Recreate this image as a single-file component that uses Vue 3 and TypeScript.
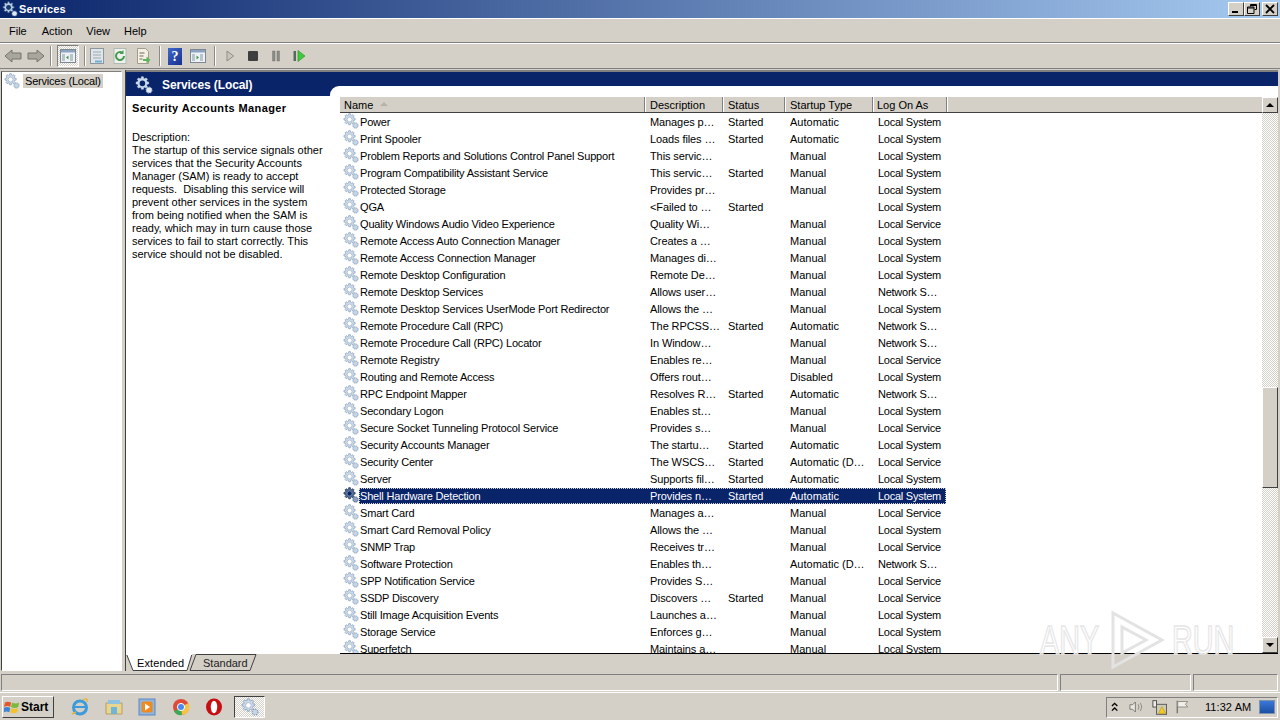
<script setup lang="ts">
interface Row { n: string; d: string; s: string; t: string; l: string; sel?: boolean }
const LS = 'Local System', LV = 'Local Service', NS = 'Network S…', ST = 'Started', AU = 'Automatic', MA = 'Manual'
const rows: Row[] = [
  { n: 'Power', d: 'Manages p…', s: ST, t: AU, l: LS },
  { n: 'Print Spooler', d: 'Loads files …', s: ST, t: AU, l: LS },
  { n: 'Problem Reports and Solutions Control Panel Support', d: 'This servic…', s: '', t: MA, l: LS },
  { n: 'Program Compatibility Assistant Service', d: 'This servic…', s: ST, t: MA, l: LS },
  { n: 'Protected Storage', d: 'Provides pr…', s: '', t: MA, l: LS },
  { n: 'QGA', d: '<Failed to …', s: ST, t: '', l: LS },
  { n: 'Quality Windows Audio Video Experience', d: 'Quality Wi…', s: '', t: MA, l: LV },
  { n: 'Remote Access Auto Connection Manager', d: 'Creates a …', s: '', t: MA, l: LS },
  { n: 'Remote Access Connection Manager', d: 'Manages di…', s: '', t: MA, l: LS },
  { n: 'Remote Desktop Configuration', d: 'Remote De…', s: '', t: MA, l: LS },
  { n: 'Remote Desktop Services', d: 'Allows user…', s: '', t: MA, l: NS },
  { n: 'Remote Desktop Services UserMode Port Redirector', d: 'Allows the …', s: '', t: MA, l: LS },
  { n: 'Remote Procedure Call (RPC)', d: 'The RPCSS…', s: ST, t: AU, l: NS },
  { n: 'Remote Procedure Call (RPC) Locator', d: 'In Window…', s: '', t: MA, l: NS },
  { n: 'Remote Registry', d: 'Enables re…', s: '', t: MA, l: LV },
  { n: 'Routing and Remote Access', d: 'Offers rout…', s: '', t: 'Disabled', l: LS },
  { n: 'RPC Endpoint Mapper', d: 'Resolves R…', s: ST, t: AU, l: NS },
  { n: 'Secondary Logon', d: 'Enables st…', s: '', t: MA, l: LS },
  { n: 'Secure Socket Tunneling Protocol Service', d: 'Provides s…', s: '', t: MA, l: LV },
  { n: 'Security Accounts Manager', d: 'The startu…', s: ST, t: AU, l: LS },
  { n: 'Security Center', d: 'The WSCS…', s: ST, t: 'Automatic (D…', l: LV },
  { n: 'Server', d: 'Supports fil…', s: ST, t: AU, l: LS },
  { n: 'Shell Hardware Detection', d: 'Provides n…', s: ST, t: AU, l: LS, sel: true },
  { n: 'Smart Card', d: 'Manages a…', s: '', t: MA, l: LV },
  { n: 'Smart Card Removal Policy', d: 'Allows the …', s: '', t: MA, l: LS },
  { n: 'SNMP Trap', d: 'Receives tr…', s: '', t: MA, l: LV },
  { n: 'Software Protection', d: 'Enables th…', s: '', t: 'Automatic (D…', l: NS },
  { n: 'SPP Notification Service', d: 'Provides S…', s: '', t: MA, l: LV },
  { n: 'SSDP Discovery', d: 'Discovers …', s: ST, t: MA, l: LV },
  { n: 'Still Image Acquisition Events', d: 'Launches a…', s: '', t: MA, l: LS },
  { n: 'Storage Service', d: 'Enforces g…', s: '', t: MA, l: LS },
  { n: 'Superfetch', d: 'Maintains a…', s: '', t: MA, l: LS },
]
const columns = [
  { label: 'Name', w: 305 },
  { label: 'Description', w: 78 },
  { label: 'Status', w: 62 },
  { label: 'Startup Type', w: 88 },
  { label: 'Log On As', w: 74 },
]
const gearPath = 'M7 0.8h2l.3 1.8 1.3.5 1.5-1 1.4 1.4-1 1.5.5 1.3 1.8.3v2l-1.8.3-.5 1.3 1 1.5-1.4 1.4-1.5-1-1.3.5-.3 1.8h-2l-.3-1.8-1.3-.5-1.5 1-1.4-1.4 1-1.5-.5-1.3-1.8-.3v-2l1.8-.3.5-1.3-1-1.5 1.4-1.4 1.5 1 1.3-.5z'
const descLines = [
  'The startup of this service signals other',
  'services that the Security Accounts',
  'Manager (SAM) is ready to accept',
  'requests.\u00a0 Disabling this service will',
  'prevent other services in the system',
  'from being notified when the SAM is',
  'ready, which may in turn cause those',
  'services to fail to start correctly. This',
  'service should not be disabled.',
]
</script>

<template>
  <div class="screen">
    <header class="titlebar">
      <svg class="ico16" viewBox="0 0 16 16"><g transform="scale(.82)"><path :d="gearPath" fill="#b9cfe6" stroke="#32527f" stroke-width=".8" /><circle cx="8" cy="8" r="3" fill="#17386e" /></g><circle cx="12.500" cy="12.500" r="2.600" fill="#dfe9f4" stroke="#4a6b9a" stroke-width="1" stroke-dasharray="1.200 .8" /></svg>
      <span class="title">Services</span>
      <div class="winbtns">
        <button class="wb"><span class="wmin"></span></button>
        <button class="wb"><svg viewBox="0 0 10 10" width="10" height="10"><path d="M3.5 .5h6v5h-2M3.5 .5v2M.5 3h6.5v6.500H.5z M.5 4h6.500 M3.500 1.500h6" fill="none" stroke="#000" /></svg></button>
        <button class="wb wbx"><svg viewBox="0 0 10 10" width="10" height="10"><path d="M1 1l8 8M9 1l-8 8" stroke="#000" stroke-width="1.800" /></svg></button>
      </div>
    </header>

    <nav class="menubar">
      <span class="m-file">File</span><span class="m-action">Action</span><span class="m-view">View</span><span class="m-help">Help</span>
    </nav>

    <div class="toolbar">
      <svg class="tb-arrow" viewBox="0 0 18 16"><path d="M1 8l7-6v3h9v6H8v3z" fill="#a9a69e" stroke="#77746c" /></svg>
      <svg class="tb-arrow" viewBox="0 0 18 16"><path d="M17 8l-7-6v3H1v6h9v3z" fill="#a9a69e" stroke="#77746c" /></svg>
      <i class="sep sep1"></i>
      <div class="tb-pressed">
        <svg class="ico18" viewBox="0 0 18 18"><rect x="1.500" y="2.500" width="15" height="13" fill="#eef2f6" stroke="#7d8890" /><rect x="2" y="3" width="14" height="2.500" fill="#8ba3c0" /><path d="M3 7h3v7H3zM11 7h3v7h-3z" fill="#b9c3cc" /><path d="M9.500 8.500v4l-2.500-2z" fill="#3d9a4a" /></svg>
      </div>
      <i class="sep sep2"></i>
      <svg class="ico18" viewBox="0 0 18 18"><rect x="2.500" y="1.500" width="13" height="15" fill="#dfe5e8" stroke="#8b979d" /><path d="M5 5h8M5 8h8M5 11h8" stroke="#9aa9b5" /><path d="M7 14.500h7" stroke="#6fb0d4" stroke-width="2" /></svg>
      <svg class="ico18" viewBox="0 0 18 18"><rect x="3" y="1.500" width="12" height="15" fill="#eef2ee" stroke="#b0bab0" /><path d="M13 9a4 4 0 1 1-1.500-3.100" fill="none" stroke="#4a9a54" stroke-width="2" /><path d="M12.500 3v4h-4z" fill="#4a9a54" /></svg>
      <svg class="ico18" viewBox="0 0 18 18"><path d="M3.500 1.500h8l3 3v12h-11z" fill="#f4f1e4" stroke="#a09d8a" /><path d="M5.500 6h5M5.500 9h4M5.500 12h3" stroke="#6a6a5e" /><path d="M9 12h3.500v-2.500l4 3.500-4 3.500V14H9z" fill="#5cb45f" /></svg>
      <i class="sep sep3"></i>
      <div class="help">?</div>
      <svg class="ico18 gap-s" viewBox="0 0 18 18"><rect x="1.500" y="2.500" width="15" height="13" fill="#eef2f6" stroke="#7d8890" /><rect x="2" y="3" width="14" height="2.500" fill="#8ba3c0" /><path d="M3 7h3v7H3zM11 7h3v7h-3z" fill="#b9c3cc" /><path d="M7.500 8.500v4l2.500-2z" fill="#3d9a4a" /></svg>
      <i class="sep sep3"></i>
      <svg class="ctl" viewBox="0 0 14 14"><path d="M4 2l6.500 5L4 12z" fill="#c9c6be" stroke="#8f8c85" /></svg>
      <svg class="ctl" viewBox="0 0 14 14"><rect x="2" y="2" width="10" height="10" rx="1" fill="#3e3e3e" /></svg>
      <svg class="ctl" viewBox="0 0 14 14"><path d="M3.500 2h2.500v10H3.500zM8 2h2.500v10H8z" fill="#8b8b87" stroke="#77776f" stroke-width=".5" /></svg>
      <svg class="ctl" viewBox="0 0 14 14"><path d="M1.500 2h2.500v10H1.500z" fill="#5a6a5a" /><path d="M6 1.500l7 5.500-7 5.500z" fill="#3ecb3a" stroke="#238a22" stroke-width=".6" /></svg>
    </div>

    <main class="panes">
      <aside class="tree">
        <div class="tree-item">
          <svg class="ico16" viewBox="0 0 16 16"><g transform="scale(.82)"><path :d="gearPath" fill="#cfdbe9" stroke="#8aa2bd" stroke-width=".9" /><circle cx="8" cy="8" r="3" fill="#fff" stroke="#8aa2bd" stroke-width=".7" /></g><circle cx="12.500" cy="12.500" r="2.600" fill="#c6d5e5" stroke="#7f98b5" stroke-width="1" stroke-dasharray="1.200 .8" /></svg>
          <span class="tree-label">Services (Local)</span>
        </div>
      </aside>

      <section class="right">
        <div class="right-body">
          <div class="detail">
            <div class="detail-head">
              <svg class="ico18" viewBox="0 0 16 16"><g transform="scale(.82)"><path :d="gearPath" fill="#c8d9ec" stroke="#e8f0f8" stroke-width=".5" /><circle cx="8" cy="8" r="3" fill="#0a246a" /></g><circle cx="12.500" cy="12.500" r="2.600" fill="#dfe9f4" stroke="#9fb5d0" stroke-width="1" stroke-dasharray="1.200 .8" /></svg>
              <span>Services (Local)</span>
            </div>
            <div class="detail-text">
              <h2>Security Accounts Manager</h2>
              <p class="d-label">Description:</p>
              <p v-for="line in descLines" :key="line" class="d-body">{{ line }}</p>
            </div>
          </div>

          <div class="listpane">
            <div class="listwhite">
              <div class="listframe">
                <div class="list">
                  <div class="thead">
                    <div v-for="(c, i) in columns" :key="c.label" class="th" :style="{ width: c.w + 'px' }">
                      {{ c.label }}<span v-if="i === 0" class="sort"></span>
                    </div>
                  </div>
                  <div class="tbody">
                    <div v-for="r in rows" :key="r.n" class="row" :class="{ sel: r.sel }">
                      <svg class="ico16 rowico" viewBox="0 0 16 16">
                        <g transform="scale(.82)">
                          <path :d="gearPath" :fill="r.sel ? '#4e6a94' : '#cfdbe9'" :stroke="r.sel ? '#1c2f52' : '#8aa2bd'" stroke-width=".9" />
                          <circle cx="8" cy="8" r="3" :fill="r.sel ? '#0a246a' : '#fff'" stroke="#8aa2bd" stroke-width=".7" />
                        </g>
                        <circle cx="12.500" cy="12.500" r="2.600" :fill="r.sel ? '#8ea4c2' : '#c6d5e5'" :stroke="r.sel ? '#33507c' : '#7f98b5'" stroke-width="1" stroke-dasharray="1.200 .8" />
                      </svg>
                      <div class="cells">
                        <div class="c c-name">{{ r.n }}</div>
                        <div class="c c-d">{{ r.d }}</div>
                        <div class="c c-s">{{ r.s }}</div>
                        <div class="c c-t">{{ r.t }}</div>
                        <div class="c c-l">{{ r.l }}</div>
                      </div>
                    </div>
                  </div>
                </div>
                <div class="vscroll">
                  <button class="sb"><span class="up"></span></button>
                  <div class="track track-a"></div>
                  <div class="thumb"></div>
                  <div class="track track-b"></div>
                  <button class="sb"><span class="down"></span></button>
                </div>
              </div>
            </div>
          </div>
        </div>

        <div class="tabs">
          <svg class="tabshape" width="66" height="17" viewBox="0 0 66 17"><path d="M.500 0L7 16.500h54L66 0" fill="#fff" stroke="#404040" /><path d="M0 .500h66" stroke="#fff" /></svg>
          <span class="tab tab-a">Extended</span>
          <svg class="tabshape tab2" width="68" height="17" viewBox="0 0 68 17"><path d="M1 16.500L7 .5h60L61 16.500z" fill="#d4d0c8" stroke="#404040" /></svg>
          <span class="tab tab-b">Standard</span>
        </div>
      </section>
    </main>

    <div class="statusbar">
      <div class="st st1"></div><div class="st st2"></div><div class="st st3"></div>
    </div>

    <footer class="taskbar">
      <button class="start">
        <svg width="16" height="16" viewBox="0 0 18 16"><path d="M1 3q3-2 7 0l-1 5q-3-2-7 0z" fill="#e5562b" /><path d="M9 3q4 2 8 0l-1 5q-4 2-8 0z" fill="#7cb93a" /><path d="M0 9q3-2 7 0l-1 5q-3-2-7 0z" fill="#3a83d6" /><path d="M8 9q4 2 8 0l-1 5q-4 2-8 0z" fill="#f2c22e" /></svg>
        <b>Start</b>
      </button>
      <div class="quick">
        <svg width="20" height="20" viewBox="0 0 20 20"><circle cx="10" cy="10.500" r="6.500" fill="none" stroke="#3d9bdc" stroke-width="3" /><path d="M5 10h11" stroke="#3d9bdc" stroke-width="2" /><path d="M3 16Q1 18 6 15M13 3q5-3 4 2" fill="none" stroke="#e5b43a" stroke-width="1.500" /></svg>
        <svg width="20" height="20" viewBox="0 0 20 20"><path d="M2 6h16v11H2z" fill="#e9d58f" stroke="#b59f5e" /><path d="M4 3h12v4H4z" fill="#8fc1e0" /><path d="M7 10h6v7H7z" fill="#6fb5d8" /></svg>
        <svg width="20" height="20" viewBox="0 0 20 20"><rect x="2" y="2" width="16" height="16" fill="#8fb4de" stroke="#5f88bf" /><rect x="4.500" y="4.500" width="11" height="11" rx="2" fill="#ee8a1e" /><path d="M8 6.500l5 3.500-5 3.500z" fill="#fff" /></svg>
        <svg width="20" height="20" viewBox="0 0 20 20"><circle cx="10" cy="10" r="8" fill="#dd4b39" /><path d="M10 10L3 14.500A8 8 0 0 0 11 18z" fill="#3cab54" /><path d="M10 10l1 8a8 8 0 0 0 6.500-12z" fill="#f6c344" /><circle cx="10" cy="10" r="3.600" fill="#4a8bf0" stroke="#fff" /></svg>
        <svg width="20" height="20" viewBox="0 0 20 20"><ellipse cx="10" cy="10" rx="8" ry="8.500" fill="#c60f13" /><ellipse cx="10" cy="10" rx="3.200" ry="6.200" fill="#fff" /></svg>
      </div>
      <div class="task-active">
        <svg class="ico18" viewBox="0 0 16 16"><g transform="scale(.82)"><path :d="gearPath" fill="#cfdbe9" stroke="#8aa2bd" stroke-width=".9" /><circle cx="8" cy="8" r="3" fill="#fff" stroke="#8aa2bd" stroke-width=".7" /></g><circle cx="12.500" cy="12.500" r="2.600" fill="#c6d5e5" stroke="#7f98b5" stroke-width="1" stroke-dasharray="1.200 .8" /></svg>
      </div>
      <div class="tray">
        <svg class="tray-up" width="8" height="10" viewBox="0 0 8 10"><path d="M1 4l3-3 3 3M1 9l3-3 3 3" fill="none" stroke="#000" stroke-width="1.500" /></svg>
        <svg width="16" height="16" viewBox="0 0 16 16"><path d="M1 5.500h3l3-3v11l-3-3H1z" fill="#e9e7e0" stroke="#77746c" /><path d="M10 5q2 3 0 6M12.500 3.500q3 4.500 0 9" fill="none" stroke="#8a8880" /></svg>
        <svg width="17" height="17" viewBox="0 0 17 17"><rect x="1" y="1" width="4" height="7" fill="#f0eee8" stroke="#444" /><rect x="5" y="5" width="11" height="11" fill="#cfc9b8" stroke="#555" /><path d="M11 7.500l4 7.500H7z" fill="#f4c91e" stroke="#a88a10" stroke-width=".5" /></svg>
        <svg width="16" height="16" viewBox="0 0 16 16"><path d="M2.500 1v14" stroke="#77746c" stroke-width="1.500" /><path d="M3 2h11l-2.500 3 2.500 3H3z" fill="#f1efe9" stroke="#8a8880" /></svg>
        <span class="clock">11:32 AM</span>
        <div class="showdesk"></div>
      </div>
    </footer>

    <div class="watermark">
      <span class="wm-text">ANY</span>
      <svg class="wm-play" width="55" height="60" viewBox="0 0 55 60"><path d="M3 3v54l49-27zM12 17v26l24-13z" fill="none" stroke="#e3e3e3" stroke-width="3" /></svg>
      <span class="wm-text">RUN</span>
    </div>
  </div>
</template>

<style>
html, body { margin: 0; padding: 0; background: #d4d0c8; overflow: hidden; }
</style>

<style scoped>
.screen {
  position: relative;
  width: 1280px;
  height: 720px;
  display: flex;
  flex-direction: column;
  background: #d4d0c8;
  overflow: hidden;
  font-family: "Liberation Sans", Arial, sans-serif;
  font-size: 11px;
  color: #000;
}
.ico16 { width: 16px; height: 16px; flex: none; }
.ico18 { width: 18px; height: 18px; flex: none; }
button { padding: 0; font: inherit; }

.titlebar {
  height: 18px;
  flex: none;
  display: flex;
  align-items: center;
  padding-left: 2px;
  gap: 1px;
  background: linear-gradient(90deg, #0a246a, #a6caf0);
  color: #fff;
}
.title { font-weight: 700; font-size: 11px; letter-spacing: .2px; }
.winbtns { margin-left: auto; display: flex; margin-right: 2px; }
.wb {
  width: 16px; height: 14px;
  background: #d4d0c8;
  border: 1px solid;
  border-color: #fff #404040 #404040 #fff;
  display: flex; align-items: center; justify-content: center;
  position: relative;
}
.wbx { margin-left: 2px; }
.wmin { width: 6px; height: 2px; background: #000; margin-top: 6px; margin-right: 2px; }

.menubar {
  height: 25px;
  flex: none;
  box-sizing: border-box;
  display: flex;
  align-items: center;
  border-top: 1px solid #fff;
  border-bottom: 1px solid #808080;
}
.m-file { margin-left: 9px; }
.m-action { margin-left: 15px; }
.m-view { margin-left: 14px; }
.m-help { margin-left: 14px; }

.toolbar {
  height: 26px;
  flex: none;
  box-sizing: border-box;
  display: flex;
  align-items: center;
  padding-left: 4px;
  gap: 5px;
  border-top: 1px solid #fff;
  border-bottom: 1px solid #808080;
}
.tb-arrow { width: 18px; height: 16px; }
.sep { width: 1px; height: 20px; background: #8c8a84; border-right: 1px solid #fff; }
.sep2 { margin-right: -3px; }
.sep3 { margin-left: 2px; }
.tb-pressed {
  width: 22px; height: 22px;
  box-sizing: border-box;
  display: flex; align-items: center; justify-content: center;
  border: 1px solid;
  border-color: #808080 #fff #fff #808080;
  background: repeating-conic-gradient(#d4d0c8 0 25%, #fff 0 50%) 0 0 / 2px 2px;
}
.help {
  width: 14px; height: 17px;
  margin-left: 2px;
  background: linear-gradient(135deg, #3f68c8, #16308f);
  color: #fff;
  font: 700 14px/17px "Liberation Serif", serif;
  text-align: center;
}
.gap-s { margin-left: 2px; }
.ctl { width: 14px; height: 14px; margin: 0 2px; }

.panes {
  flex: 1;
  min-height: 0;
  display: flex;
  padding: 1px 2px 0 1px;
  gap: 3px;
}
.tree {
  width: 121px;
  height: 600px;
  margin-top: 1px;
  flex: none;
  box-sizing: border-box;
  background: #fff;
  border: 1px solid;
  border-color: #808080 #fff #fff #404040;
  padding: 1px 2px;
}
.tree-item { display: flex; align-items: center; gap: 3px; }
.tree-label { background: #d4d0c8; padding: 0 2px; line-height: 14px; letter-spacing: -.2px; }

.right { flex: 1; min-width: 0; display: flex; flex-direction: column; border-left: 1px solid #404040; }
.right-body { flex: 1; min-height: 0; display: flex; background: #fff; border-top: 2px solid #808080; }

.detail { width: 204px; flex: none; display: flex; flex-direction: column; }
.detail-head {
  height: 24px;
  box-sizing: border-box;
  padding: 2px 0 0 9px;
  flex: none;
  display: flex;
  align-items: center;
  gap: 9px;
  background: #0a246a;
  color: #fff;
  font-weight: 700;
  font-size: 12px;
  letter-spacing: -.1px;
}
.detail-text { padding: 5px 0 0 6px; white-space: nowrap; }
.detail-text h2 { margin: 0; font-size: 11px; font-weight: 700; line-height: 14px; letter-spacing: .4px; }
.d-label { margin: 16px 0 0; line-height: 13px; }
.d-body { margin: 0; line-height: 13px; letter-spacing: -.02px; }

.listpane { flex: 1; min-width: 0; display: flex; flex-direction: column; background: #0a246a; }
.listwhite {
  flex: 1;
  min-height: 0;
  display: flex;
  flex-direction: column;
  margin-top: 14px;
  background: #fff;
  border-top-left-radius: 9px;
}
.listframe {
  flex: 1;
  min-height: 0;
  display: flex;
  margin-top: 11px;
  margin-left: 10px;
  border-bottom: 1px solid #000;
}
.list { flex: 1; min-width: 0; display: flex; flex-direction: column; overflow: hidden; }
.thead {
  height: 16px;
  flex: none;
  box-sizing: border-box;
  display: flex;
  background: #d4d0c8;
  border-bottom: 1px solid #404040;
}
.th {
  flex: none;
  box-sizing: border-box;
  padding-left: 5px;
  line-height: 17px;
  border-right: 1px solid #808080;
  box-shadow: 1px 0 0 #fff;
  white-space: nowrap;
  position: relative;
}
.th:first-child, .th:last-child { padding-left: 4px; }
.sort {
  position: absolute;
  left: 40px;
  top: 5px;
  border: 4px solid transparent;
  border-top: 0;
  border-bottom: 4px solid #b5b2aa;
}
.tbody { flex: 1; min-height: 0; overflow: hidden; }
.row { height: 17px; display: flex; align-items: center; width: 606px; white-space: nowrap; padding-left: 3px; box-sizing: border-box; }
.rowico { margin-top: -1px; }
.cells { display: flex; align-items: center; height: 16px; line-height: 16px; }
.c { flex: none; box-sizing: border-box; padding-left: 5px; }
.c-name { width: 286px; padding-left: 1px; letter-spacing: -.18px; }
.c-d { width: 78px; letter-spacing: -.1px; }
.c-s { width: 62px; }
.c-t { width: 88px; }
.c-l { width: 73px; letter-spacing: -.25px; }
.row.sel .cells { background: #0a246a; color: #fff; outline: 1px dotted #d4d0c8; outline-offset: -1px; }
.vscroll { width: 16px; flex: none; display: flex; flex-direction: column; }
.track { background: repeating-conic-gradient(#d4d0c8 0 25%, #fff 0 50%) 0 0 / 2px 2px; }
.track-a { height: 274px; flex: none; }
.track-b { flex: 1; }
.thumb {
  height: 101px;
  flex: none;
  box-sizing: border-box;
  background: #d4d0c8;
  border: 1px solid;
  border-color: #fff #404040 #404040 #fff;
}
.sb {
  width: 16px; height: 16px;
  flex: none;
  background: #d4d0c8;
  border: 1px solid;
  border-color: #fff #404040 #404040 #fff;
  display: flex; align-items: center; justify-content: center;
}
.up { border: 4px solid transparent; border-top: 0; border-bottom: 4px solid #000; }
.down { border: 4px solid transparent; border-bottom: 0; border-top: 4px solid #000; }

.tabs { height: 17px; flex: none; position: relative; background: #d4d0c8; }
.tabshape { position: absolute; left: 0; top: 0; }
.tab2 { left: 63px; }
.tab { position: absolute; top: 1px; line-height: 16px; }
.tab-a { left: 11px; letter-spacing: .1px; }
.tab-b { left: 77px; color: #222; }

.statusbar {
  height: 21px;
  flex: none;
  box-sizing: border-box;
  display: flex;
  gap: 2px;
  margin-top: 1px;
  padding: 2px 2px 1px 1px;
  border-bottom: 1px solid #fff;
}
.st { border: 1px solid; border-color: #808080 #fff #fff #808080; }
.st1 { flex: 1; }
.st2 { width: 129px; }
.st3 { width: 83px; }

.taskbar {
  height: 27px;
  flex: none;
  box-sizing: border-box;
  display: flex;
  align-items: center;
  padding: 1px 0 0 2px;
}
.start {
  width: 52px; height: 22px;
  box-sizing: border-box;
  background: #d4d0c8;
  border: 1px solid;
  border-color: #fff #404040 #404040 #fff;
  display: flex; align-items: center; gap: 1px;
  padding-left: 1px;
  font-size: 12px;
  font-family: "Liberation Sans", sans-serif;
}
.quick { display: flex; gap: 13.500px; margin-left: 16px; }
.task-active {
  width: 31px; height: 22px;
  margin-left: 10px;
  box-sizing: border-box;
  display: flex; align-items: center; justify-content: center;
  border: 1px solid;
  border-color: #404040 #fff #fff #404040;
  background: repeating-conic-gradient(#d4d0c8 0 25%, #fff 0 50%) 0 0 / 2px 2px;
}
.tray {
  margin-left: auto;
  margin-right: 2px;
  width: 172px; height: 21px;
  box-sizing: border-box;
  display: flex; align-items: center; gap: 8px;
  padding-left: 4px;
  border: 1px solid;
  border-color: #808080 #fff #fff #808080;
}
.tray-up { margin-right: 3px; }
.clock { margin-left: 7px; font-size: 11px; white-space: nowrap; letter-spacing: .1px; }
.showdesk {
  width: 15px; height: 12px;
  margin-left: auto; margin-right: 2px;
  background: linear-gradient(#3b78d8, #1c4fa3);
  border: 1px solid #7d93b0;
}

.watermark {
  position: absolute;
  left: 1040px;
  top: 610px;
  height: 60px;
  display: flex;
  align-items: center;
  pointer-events: none;
}
.wm-text {
  display: block;
  width: 60px;
  font: 400 40px/60px "Liberation Sans", sans-serif;
  color: transparent;
  -webkit-text-stroke: 1.500px #e6e6e6;
  transform: scaleX(.72);
  transform-origin: left center;
  white-space: nowrap;
}
.wm-play { margin: 0 7px 0 10px; flex: none; }
</style>
